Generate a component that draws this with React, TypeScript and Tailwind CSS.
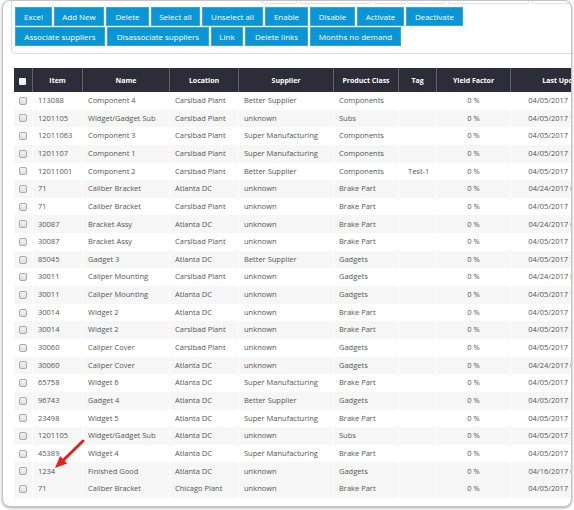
import React from 'react';

type Row = {
  item: string;
  name: string;
  location: string;
  supplier: string;
  productClass: string;
  tag: string;
  updated: string;
};

const d1 = '04/05/2017 10:41 AM';
const d2 = '04/24/2017 03:12 PM';
const d3 = '04/16/2017 02:30 PM';

const rows: Row[] = [
  { item: '113088', name: 'Component 4', location: 'Carslbad Plant', supplier: 'Better Supplier', productClass: 'Components', tag: '', updated: d1 },
  { item: '1201105', name: 'Widget/Gadget Sub', location: 'Carslbad Plant', supplier: 'unknown', productClass: 'Subs', tag: '', updated: d1 },
  { item: '12011063', name: 'Component 3', location: 'Carslbad Plant', supplier: 'Super Manufacturing', productClass: 'Components', tag: '', updated: d1 },
  { item: '1201107', name: 'Component 1', location: 'Carslbad Plant', supplier: 'Super Manufacturing', productClass: 'Components', tag: '', updated: d1 },
  { item: '12011001', name: 'Component 2', location: 'Carslbad Plant', supplier: 'Better Supplier', productClass: 'Components', tag: 'Test-1', updated: d1 },
  { item: '71', name: 'Caliber Bracket', location: 'Atlanta DC', supplier: 'unknown', productClass: 'Brake Part', tag: '', updated: d2 },
  { item: '71', name: 'Caliber Bracket', location: 'Carslbad Plant', supplier: 'unknown', productClass: 'Brake Part', tag: '', updated: d1 },
  { item: '30087', name: 'Bracket Assy', location: 'Atlanta DC', supplier: 'unknown', productClass: 'Brake Part', tag: '', updated: d2 },
  { item: '30087', name: 'Bracket Assy', location: 'Carslbad Plant', supplier: 'unknown', productClass: 'Brake Part', tag: '', updated: d1 },
  { item: '85045', name: 'Gadget 3', location: 'Atlanta DC', supplier: 'Better Supplier', productClass: 'Gadgets', tag: '', updated: d1 },
  { item: '30011', name: 'Caliper Mounting', location: 'Carslbad Plant', supplier: 'unknown', productClass: 'Gadgets', tag: '', updated: d2 },
  { item: '30011', name: 'Caliper Mounting', location: 'Atlanta DC', supplier: 'unknown', productClass: 'Gadgets', tag: '', updated: d1 },
  { item: '30014', name: 'Widget 2', location: 'Atlanta DC', supplier: 'unknown', productClass: 'Brake Part', tag: '', updated: d1 },
  { item: '30014', name: 'Widget 2', location: 'Carslbad Plant', supplier: 'unknown', productClass: 'Brake Part', tag: '', updated: d1 },
  { item: '30060', name: 'Caliper Cover', location: 'Carslbad Plant', supplier: 'unknown', productClass: 'Gadgets', tag: '', updated: d1 },
  { item: '30060', name: 'Caliper Cover', location: 'Atlanta DC', supplier: 'unknown', productClass: 'Gadgets', tag: '', updated: d2 },
  { item: '65758', name: 'Widget 6', location: 'Atlanta DC', supplier: 'Super Manufacturing', productClass: 'Brake Part', tag: '', updated: d1 },
  { item: '96743', name: 'Gadget 4', location: 'Atlanta DC', supplier: 'Better Supplier', productClass: 'Gadgets', tag: '', updated: d1 },
  { item: '23498', name: 'Widget 5', location: 'Atlanta DC', supplier: 'Super Manufacturing', productClass: 'Brake Part', tag: '', updated: d1 },
  { item: '1201105', name: 'Widget/Gadget Sub', location: 'Atlanta DC', supplier: 'unknown', productClass: 'Subs', tag: '', updated: d1 },
  { item: '45389', name: 'Widget 4', location: 'Atlanta DC', supplier: 'Super Manufacturing', productClass: 'Brake Part', tag: '', updated: d1 },
  { item: '1234', name: 'Finished Good', location: 'Atlanta DC', supplier: 'unknown', productClass: 'Gadgets', tag: '', updated: d3 },
  { item: '71', name: 'Caliber Bracket', location: 'Chicago Plant', supplier: 'unknown', productClass: 'Brake Part', tag: '', updated: d1 },
];

const topButtons: [string, string][] = [
  ['Excel', 'w-[37px]'],
  ['Add New', 'w-[50px]'],
  ['Delete', 'w-[43px]'],
  ['Select all', 'w-[49px]'],
  ['Unselect all', 'w-[61px]'],
  ['Enable', 'w-[43px]'],
  ['Disable', 'w-[45px]'],
  ['Activate', 'w-[47px]'],
  ['Deactivate', 'w-[57px]'],
];

const bottomButtons: [string, string][] = [
  ['Associate suppliers', 'w-[90px]'],
  ['Disassociate suppliers', 'w-[102px]'],
  ['Link', 'w-[32px]'],
  ['Delete links', 'w-[63px]'],
  ['Months no demand', 'w-[91px]'],
];

const headers = ['Item', 'Name', 'Location', 'Supplier', 'Product Class', 'Tag', 'Yield Factor', 'Last Updated'];
const colWidths = ['w-[19px]', 'w-[50px]', 'w-[87px]', 'w-[69px]', 'w-[95px]', 'w-[65px]', 'w-[38px]', 'w-[74px]', 'w-[110px]'];

function ActionButton({ label, width }: { label: string; width: string }) {
  return (
    <button className={`${width} h-[19px] shrink-0 border border-[#33a6dc] bg-[#0a96d4] text-center text-[8px] leading-none whitespace-nowrap text-white`}>
      {label}
    </button>
  );
}

function RowCheckbox() {
  return <span className="inline-block h-[8px] w-[8px] rounded-[2px] border border-[#a9a9a9] bg-gradient-to-b from-[#f4f4f4] to-[#dedede] align-middle" />;
}

export default function App() {
  return (
    <div className="relative h-[510px] w-[574px] overflow-hidden bg-white font-['Open_Sans',sans-serif]">
      <div className="mx-[2px] h-[507px] overflow-hidden rounded-[8px] border border-[#c4c4c4] bg-white shadow-[0_1px_3px_rgba(0,0,0,0.35)]">
        <div className="-mt-[8px] ml-[8px] w-[620px] rounded-[4px] border border-[#dcdcdc] pb-[7px] pl-[3px]">
          <div className="ml-[247px] flex h-[10px] gap-[3px]">
            <div className="w-[35px] rounded-b-[2px] border-x border-b border-[#e2e2e2]" />
            <div className="w-[71px] rounded-b-[2px] border-x border-b border-[#e2e2e2]" />
            <div className="w-[71px] rounded-b-[2px] border-x border-b border-[#e2e2e2]" />
            <div className="w-[81px] rounded-b-[2px] border-x border-b border-[#e2e2e2]" />
            <div className="w-[60px] rounded-b-[2px] border-x border-b border-[#e2e2e2]" />
          </div>
          <div className="mt-[3px] flex flex-col gap-[1px]">
            <div className="flex gap-[2px]">
              {topButtons.map(([label, width]) => <ActionButton key={label} label={label} width={width} />)}
            </div>
            <div className="flex gap-[2px]">
              {bottomButtons.map(([label, width]) => <ActionButton key={label} label={label} width={width} />)}
            </div>
          </div>
        </div>

        <table className="mt-[14px] ml-[10px] w-[607px] table-fixed border-collapse">
          <colgroup>
            {colWidths.map((w, i) => <col key={i} className={w} />)}
          </colgroup>
          <thead>
            <tr className="h-[22px] bg-[#2d2d39]">
              <th className="border-r border-[#62626e] text-center">
                <span className="inline-block h-[7px] w-[7px] rounded-[1px] bg-[#f2f2f2] align-middle" />
              </th>
              {headers.map((h) => (
                <th key={h} className="border-r border-[#62626e] px-[4px] text-center text-[7px] font-bold leading-none whitespace-nowrap text-white">
                  {h}
                </th>
              ))}
            </tr>
          </thead>
          <tbody>
            {rows.map((r, i) => (
              <tr key={i} className={`h-[17.65px] text-[7.5px] leading-none text-[#555] ${i % 2 === 1 || i === rows.length - 1 ? 'bg-[#f6f6f6]' : 'bg-white'}`}>
                <td className="border-x border-white text-center"><RowCheckbox /></td>
                <td className="border-x border-white pl-[5px] whitespace-nowrap">{r.item}</td>
                <td className="border-x border-white pl-[5px] whitespace-nowrap">{r.name}</td>
                <td className="border-x border-white pl-[5px] whitespace-nowrap">{r.location}</td>
                <td className="border-x border-white pl-[5px] whitespace-nowrap">{r.supplier}</td>
                <td className="border-x border-white pl-[5px] whitespace-nowrap">{r.productClass}</td>
                <td className="border-x border-white pl-[9px] whitespace-nowrap">{r.tag}</td>
                <td className="border-x border-white text-center whitespace-nowrap">0 %</td>
                <td className="border-x border-white text-center whitespace-nowrap">{r.updated}</td>
              </tr>
            ))}
          </tbody>
        </table>
      </div>

      <svg className="absolute left-[50px] top-[436px] h-[38px] w-[40px]" viewBox="0 0 40 38">
        <line x1="33" y1="5" x2="13" y2="24.5" stroke="#e3211d" strokeWidth="3" strokeLinecap="round" />
        <polygon points="5,32 17.2,27.4 10.1,20" fill="#e3211d" />
      </svg>
    </div>
  );
}
